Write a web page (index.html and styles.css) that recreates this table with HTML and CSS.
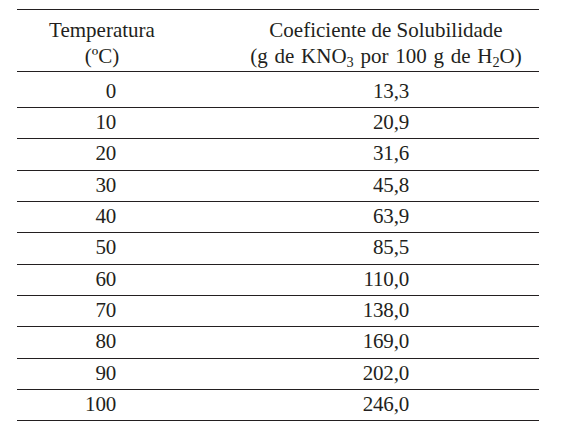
FILE: index.html
```html
<!DOCTYPE html>
<html lang="pt">
  <head>
    <meta charset="UTF-8" />
    <title>Solubilidade do KNO3</title>
    <link rel="stylesheet" href="styles.css">
  </head>
  <body>
    <table class="sol-table">
      <tr class="head">
        <th class="col-temp">Temperatura<br>(ºC)</th>
        <th class="col-coef">Coeficiente de Solubilidade<br><span class="unit">(g de KNO<sub>3</sub> por 100 g de H<sub>2</sub>O)</span></th>
      </tr>
      <tr class="first">
        <td class="col-temp">0</td>
        <td class="col-coef">13,3</td>
      </tr>
      <tr>
        <td class="col-temp">10</td>
        <td class="col-coef">20,9</td>
      </tr>
      <tr>
        <td class="col-temp">20</td>
        <td class="col-coef">31,6</td>
      </tr>
      <tr>
        <td class="col-temp">30</td>
        <td class="col-coef">45,8</td>
      </tr>
      <tr>
        <td class="col-temp">40</td>
        <td class="col-coef">63,9</td>
      </tr>
      <tr>
        <td class="col-temp">50</td>
        <td class="col-coef">85,5</td>
      </tr>
      <tr>
        <td class="col-temp">60</td>
        <td class="col-coef">110,0</td>
      </tr>
      <tr>
        <td class="col-temp">70</td>
        <td class="col-coef">138,0</td>
      </tr>
      <tr>
        <td class="col-temp">80</td>
        <td class="col-coef">169,0</td>
      </tr>
      <tr>
        <td class="col-temp">90</td>
        <td class="col-coef">202,0</td>
      </tr>
      <tr>
        <td class="col-temp">100</td>
        <td class="col-coef">246,0</td>
      </tr>
    </table>
  </body>
</html>
```

FILE: styles.css
```css
body {
  margin: 0;
  padding: 0;
  background-color: #ffffff;
  font-family: "Liberation Serif", "Times New Roman", serif;
  color: #231f20;
}

.sol-table {
  margin: 9px 0 0 17px;
  width: 522px;
  table-layout: fixed;
  border-collapse: separate;
  border-spacing: 0;
  border-top: 1px solid #231f20;
  font-size: 21px;
  line-height: 26px;
  letter-spacing: -0.2px;
}

th,
td {
  box-sizing: border-box;
  padding: 1px 0 3.33px 0;
  border-bottom: 1px solid #231f20;
  font-weight: normal;
  white-space: nowrap;
}

.head th {
  padding-top: 7px;
  padding-bottom: 2px;
  text-align: center;
  letter-spacing: 0;
}

.first td {
  padding-top: 6px;
  padding-bottom: 3px;
}

.col-temp {
  width: 170px;
}

td.col-temp {
  text-align: right;
  padding-right: 71px;
}

td.col-coef {
  text-align: right;
  padding-right: 130px;
}

th.col-coef {
  padding-left: 46px;
}

.unit {
  word-spacing: 1.5px;
}

/* keep subscripts from stretching the header lines */
sub {
  position: relative;
  bottom: -0.3em;
  font-size: 0.68em;
  line-height: 0;
  vertical-align: baseline;
}
```
